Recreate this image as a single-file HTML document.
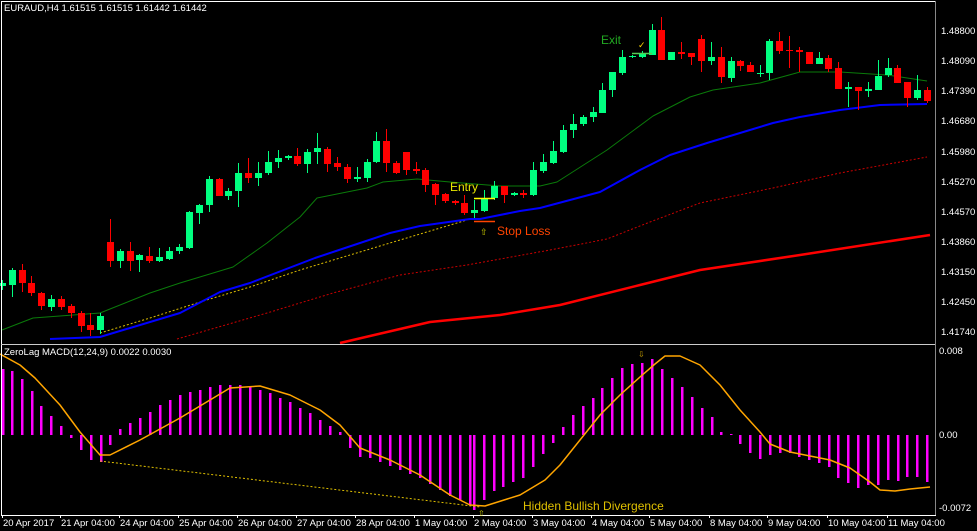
<!DOCTYPE html>
<html><head><meta charset="utf-8"><style>
html,body{margin:0;padding:0;background:#000;width:977px;height:531px;overflow:hidden}
svg{display:block}
text{font-family:"Liberation Sans",sans-serif}
</style></head><body>
<svg id="s" width="977" height="531" xmlns="http://www.w3.org/2000/svg">
<rect width="977" height="531" fill="#000"/>
<g id="g"></g>
<line x1="1" y1="1.5" x2="936" y2="1.5" stroke="#fff"/>
<line x1="1.5" y1="1" x2="1.5" y2="515" stroke="#fff"/>
<line x1="1" y1="344.5" x2="936" y2="344.5" stroke="#ccc"/>
<line x1="1" y1="515.5" x2="936" y2="515.5" stroke="#fff"/>
<line x1="935.5" y1="1" x2="935.5" y2="515" stroke="#888"/>
<text x="4" y="11" fill="#fff" font-size="9.5">EURAUD,H4  1.61515 1.61515 1.61442 1.61442</text>
<text x="4" y="355" fill="#fff" font-size="9.5">ZeroLag MACD(12,24,9) 0.0022 0.0030</text>
<g fill="#fff" font-size="9.5">
<text x="941" y="34">1.48800</text><text x="941" y="64">1.48090</text><text x="941" y="94">1.47390</text>
<text x="941" y="124">1.46680</text><text x="941" y="155">1.45980</text><text x="941" y="185">1.45270</text>
<text x="941" y="215">1.44570</text><text x="941" y="245">1.43860</text><text x="941" y="275">1.43150</text>
<text x="941" y="305">1.42450</text><text x="941" y="335">1.41740</text>
<text x="939" y="354">0.008</text><text x="939" y="438">0.00</text><text x="939" y="511">-0.0072</text>
</g>
<g fill="#fff" font-size="9.5" id="tl"></g>
<text x="601" y="44" fill="#22aa22" font-size="12">Exit</text>
<text x="638" y="48" fill="#ffd700" font-size="9">✓</text>
<text x="450" y="191" fill="#e8e800" font-size="12">Entry</text>
<text x="497" y="235" fill="#ff4400" font-size="12">Stop Loss</text>
<text x="480" y="235" fill="#c8c800" font-size="9">⇧</text>
<text x="523" y="510" fill="#e0c000" font-size="12">Hidden Bullish Divergence</text>
<text x="478" y="516" fill="#c8c800" font-size="8">⇧</text>
<text x="638" y="357" fill="#c8a000" font-size="8">⇩</text>
</svg>
<script>
var g=document.getElementById('g'),NS='http://www.w3.org/2000/svg';
function el(t,a){var e=document.createElementNS(NS,t);for(var k in a)e.setAttribute(k,a[k]);g.appendChild(e);return e;}
function pl(p,a){a.points=p.map(function(q){return q.join(',')}).join(' ');a.fill='none';a['stroke-linejoin']='round';el('polyline',a);}
pl([[2,330],[33,318],[100,313],[150,293],[180,283],[233,267],[267,243],[300,217],[317,198],[367,188],[383,182],[417,179],[450,182],[500,186],[540,186],[557,182],[607,150],[653,116],[690,97],[713,90],[760,83],[800,72],[840,72],[887,75],[927,81]],{stroke:'#0a7a0a','stroke-width':1});
pl([[100,333],[150,318],[200,302],[250,287],[300,270],[350,255],[400,240],[467,220]],{stroke:'#e0c000','stroke-width':1,'stroke-dasharray':'2,2'});
pl([[177,339],[267,313],[333,293],[400,275],[467,265],[550,250],[607,239],[650,222],[700,203],[773,188],[840,173],[927,157]],{stroke:'#cc0000','stroke-width':1,'stroke-dasharray':'2,2'});
pl([[340,343],[430,322],[500,315],[560,305],[640,285],[700,270],[800,255],[930,235]],{stroke:'#ff0000','stroke-width':2.5});
pl([[50,339],[100,337],[180,313],[220,292],[250,283],[315,258],[345,248],[390,233],[420,226],[470,219],[480,219],[520,211],[540,208],[570,200],[600,192],[640,170],[670,155],[707,143],[740,133],[773,123],[800,117],[840,110],[880,105],[927,104]],{stroke:'#0000ff','stroke-width':2});
var C=[[2,283,286,280,290,1],[12,270,285,268,297,1],[22,270,283,264,292,0],[31,283,293,276,296,0],[41,293,306,292,310,0],[51,299,307,295,311,1],[61,299,307,296,310,0],[71,306,313,304,318,0],[81,313,326,311,332,0],[90,325,330,313,336,0],[100,316,330,313,334,1],[110,242,261,219,267,0],[120,251,261,249,268,1],[130,251,261,242,271,0],[139,255,260,254,272,1],[149,256,261,247,263,0],[159,257,261,248,262,1],[169,251,259,247,260,1],[179,247,251,244,254,1],[189,212,248,211,249,1],[199,205,213,204,224,1],[209,179,205,176,212,1],[219,179,196,178,196,0],[228,191,196,188,200,1],[238,173,191,163,207,1],[248,173,178,158,183,0],[258,173,178,162,186,1],[268,162,173,151,175,1],[278,158,162,150,168,1],[288,156,158,155,160,1],[297,156,164,148,166,0],[307,152,164,149,173,1],[317,148,152,133,164,1],[327,149,164,147,172,0],[337,163,167,157,171,0],[347,167,179,164,183,0],[357,177,179,167,182,1],[367,162,178,159,182,1],[376,141,162,132,163,1],[386,141,163,129,172,0],[396,163,173,161,174,0],[406,152,170,152,175,0],[416,169,171,162,174,0],[425,170,185,168,192,0],[435,184,195,183,205,0],[445,194,201,193,203,0],[455,201,203,200,205,0],[464,203,213,195,215,0],[474,210,213,200,218,1],[484,198,211,190,212,1],[494,186,198,181,200,1],[504,186,195,186,203,0],[514,193,195,192,196,1],[523,193,195,190,198,0],[533,170,195,162,196,1],[543,162,171,154,173,1],[553,151,163,141,164,1],[563,130,152,125,153,1],[573,124,130,114,138,1],[583,117,124,115,126,1],[593,112,117,107,122,1],[602,90,113,83,113,1],[612,72,90,72,97,1],[622,57,73,50,75,1],[632,56,57,55,58,1],[642,53,57,51,58,1],[652,30,55,24,55,1],[661,30,60,17,60,0],[671,52,60,52,60,1],[681,52,54,42,59,0],[691,53,57,53,65,0],[701,39,61,35,72,0],[711,57,61,42,65,1],[721,57,77,47,83,0],[731,61,78,57,82,1],[740,61,66,60,71,0],[750,65,72,62,72,0],[760,73,74,65,77,1],[769,41,73,39,80,1],[779,41,51,32,54,0],[789,50,51,36,68,0],[799,50,52,47,72,0],[809,52,64,52,64,0],[819,58,64,52,64,1],[828,58,69,55,72,0],[838,68,89,62,89,0],[848,87,89,82,107,1],[858,87,91,87,110,0],[868,89,91,82,97,1],[878,76,90,60,90,1],[888,68,75,58,77,1],[897,68,83,65,83,0],[907,82,98,82,107,0],[917,90,98,75,100,1],[927,90,101,87,103,0]];
C.forEach(function(c){var col=c[5]?'#00ff80':'#ff0000';el('line',{x1:c[0]+.5,x2:c[0]+.5,y1:c[3],y2:c[4],stroke:col});el('rect',{x:c[0]-3,y:c[1],width:7,height:Math.max(1,c[2]-c[1]),fill:col});});
el('line',{x1:474,x2:495,y1:198.5,y2:198.5,stroke:'#ffff00','stroke-width':1.5});
el('line',{x1:474,x2:495,y1:221.5,y2:221.5,stroke:'#ff4400','stroke-width':1.5});
el('line',{x1:632,x2:652,y1:53.5,y2:53.5,stroke:'#55cc55','stroke-width':1.5});
var H=[[3,369],[12,371],[22,379],[32,391],[41,406],[51,416],[61,426],[71,438],[81,450],[91,460],[101,462],[110,445],[120,429],[130,423],[140,418],[150,412],[160,405],[170,400],[180,395],[190,392],[200,390],[210,387],[220,385],[230,385],[240,385],[250,387],[260,390],[270,393],[280,398],[290,402],[300,408],[310,413],[320,420],[330,426],[340,432],[350,448],[360,457],[370,458],[380,462],[390,466],[400,470],[410,474],[420,478],[430,484],[440,490],[450,496],[460,500],[470,505],[474,510],[484,500],[494,491],[503,487],[513,482],[523,478],[533,467],[543,454],[553,443],[563,427],[573,415],[583,406],[593,398],[602,388],[612,378],[622,368],[632,364],[642,363],[652,359],[662,369],[672,378],[682,387],[692,397],[702,408],[712,417],[721,432],[731,434],[740,444],[750,453],[760,459],[770,455],[780,453],[790,453],[799,457],[809,460],[819,463],[829,467],[838,478],[848,483],[858,488],[868,485],[878,485],[888,480],[898,481],[907,477],[917,477],[927,482]];
H.forEach(function(h){el('rect',{x:h[0]-1,y:Math.min(h[1],435),width:2.5,height:Math.abs(h[1]-435)||1,fill:'#ff00ff'});});
el('line',{x1:100,y1:461,x2:480,y2:507,stroke:'#e0c000','stroke-dasharray':'2,2'});
pl([[0,354],[20,365],[35,378],[60,405],[80,432],[100,455],[110,455],[140,440],[180,418],[230,388],[260,386],[290,395],[320,410],[340,425],[360,448],[390,460],[420,475],[450,495],[470,505],[485,506],[520,495],[545,480],[560,465],[580,440],[600,415],[620,395],[640,377],[655,364],[665,356],[680,356],[700,365],[720,385],[740,410],[760,432],[770,444],[790,452],[830,460],[850,468],[870,482],[880,490],[895,491],[910,489],[930,487]],{stroke:'#ffa500','stroke-width':1.5});
var T=[[3,'20 Apr 2017'],[61,'21 Apr 04:00'],[120,'24 Apr 04:00'],[179,'25 Apr 04:00'],[238,'26 Apr 04:00'],[297,'27 Apr 04:00'],[356,'28 Apr 04:00'],[415,'1 May 04:00'],[474,'2 May 04:00'],[533,'3 May 04:00'],[592,'4 May 04:00'],[650,'5 May 04:00'],[710,'8 May 04:00'],[768,'9 May 04:00'],[828,'10 May 04:00'],[888,'11 May 04:00']];
var tl=document.getElementById('tl');
T.forEach(function(t){var e=document.createElementNS(NS,'text');e.setAttribute('x',t[0]);e.setAttribute('y',526);e.textContent=t[1];tl.appendChild(e);var l=document.createElementNS(NS,'line');l.setAttribute('x1',t[0]-.5);l.setAttribute('x2',t[0]-.5);l.setAttribute('y1',515);l.setAttribute('y2',518);l.setAttribute('stroke','#fff');tl.appendChild(l);});
</script>
</body></html>
